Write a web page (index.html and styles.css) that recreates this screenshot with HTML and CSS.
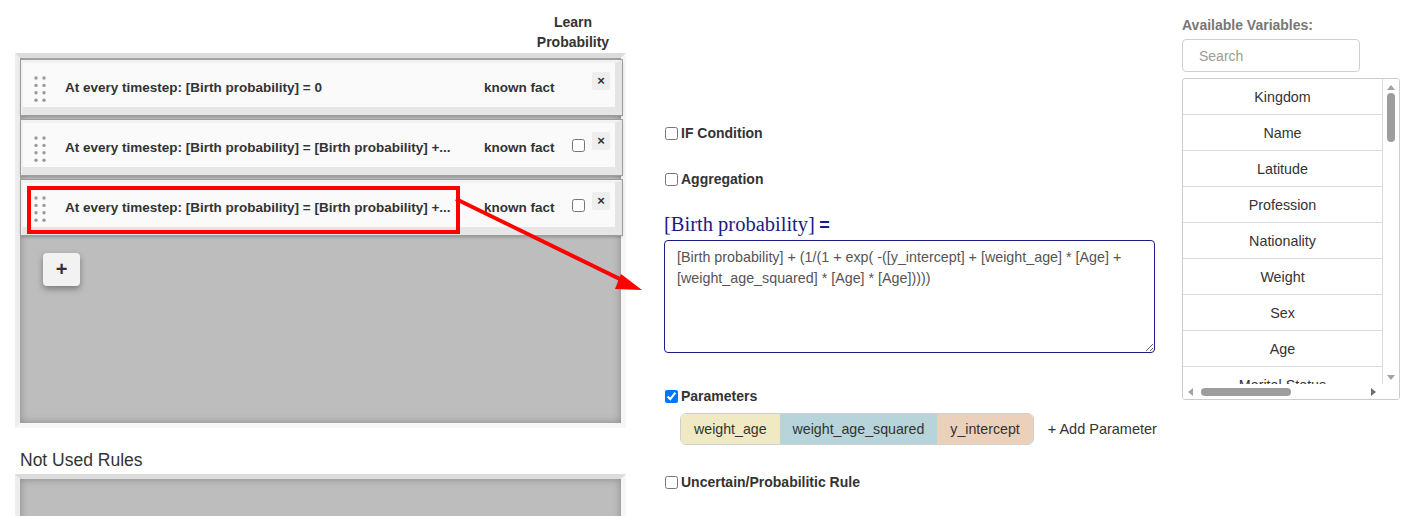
FILE: index.html
```html
<!DOCTYPE html>
<html>
<head>
<meta charset="utf-8">
<link rel="stylesheet" href="styles.css">
</head>
<body>
<div class="page">
  <div class="col-left">
    <div class="learn-head">Learn<br>Probability</div>
    <div class="panel used">
      <div class="rule">
        <svg class="dots" width="12" height="26" viewBox="0 0 12 26"><g fill="#9a9a9a"><circle cx="2" cy="2" r="1.7"/><circle cx="10" cy="2" r="1.7"/><circle cx="2" cy="9.4" r="1.7"/><circle cx="10" cy="9.4" r="1.7"/><circle cx="2" cy="16.8" r="1.7"/><circle cx="10" cy="16.8" r="1.7"/><circle cx="2" cy="24.2" r="1.7"/><circle cx="10" cy="24.2" r="1.7"/></g></svg>
        <span class="rule-text">At every timestep: [Birth probability] = 0</span>
        <span class="rule-kind">known fact</span>
        <span class="rule-check empty"></span>
        <span class="rule-x">×</span>
      </div>
      <div class="rule">
        <svg class="dots" width="12" height="26" viewBox="0 0 12 26"><g fill="#9a9a9a"><circle cx="2" cy="2" r="1.7"/><circle cx="10" cy="2" r="1.7"/><circle cx="2" cy="9.4" r="1.7"/><circle cx="10" cy="9.4" r="1.7"/><circle cx="2" cy="16.8" r="1.7"/><circle cx="10" cy="16.8" r="1.7"/><circle cx="2" cy="24.2" r="1.7"/><circle cx="10" cy="24.2" r="1.7"/></g></svg>
        <span class="rule-text">At every timestep: [Birth probability] = [Birth probability] +...</span>
        <span class="rule-kind">known fact</span>
        <input type="checkbox" class="rule-check">
        <span class="rule-x">×</span>
      </div>
      <div class="rule">
        <svg class="dots" width="12" height="26" viewBox="0 0 12 26"><g fill="#9a9a9a"><circle cx="2" cy="2" r="1.7"/><circle cx="10" cy="2" r="1.7"/><circle cx="2" cy="9.4" r="1.7"/><circle cx="10" cy="9.4" r="1.7"/><circle cx="2" cy="16.8" r="1.7"/><circle cx="10" cy="16.8" r="1.7"/><circle cx="2" cy="24.2" r="1.7"/><circle cx="10" cy="24.2" r="1.7"/></g></svg>
        <span class="rule-text">At every timestep: [Birth probability] = [Birth probability] +...</span>
        <span class="rule-kind">known fact</span>
        <input type="checkbox" class="rule-check">
        <span class="rule-x">×</span>
      </div>
      <button class="add-btn">+</button>
    </div>
    <div class="not-used">Not Used Rules</div>
    <div class="panel unused"></div>
  </div>

  <div class="col-mid">
    <label class="opt first"><input type="checkbox">IF Condition</label>
    <label class="opt agg"><input type="checkbox">Aggregation</label>
    <div class="formula-title"><span class="serif">[Birth probability]</span> <span class="eq">=</span></div>
    <textarea class="formula">[Birth probability] + (1/(1 + exp( -([y_intercept] + [weight_age] * [Age] + [weight_age_squared] * [Age] * [Age]))))</textarea>
    <label class="opt params"><input type="checkbox" checked>Parameters</label>
    <div class="param-row">
      <div class="pills">
        <span class="pill p1">weight_age</span>
        <span class="pill p2">weight_age_squared</span>
        <span class="pill p3">y_intercept</span>
      </div>
      <span class="add-param">+ Add Parameter</span>
    </div>
    <label class="opt uncertain"><input type="checkbox">Uncertain/Probabilitic Rule</label>
  </div>

  <div class="col-right">
    <div class="avail">Available Variables:</div>
    <input class="search" type="text" placeholder="Search">
    <div class="varbox">
      <div class="vars">
        <div class="var">Kingdom</div>
        <div class="var">Name</div>
        <div class="var">Latitude</div>
        <div class="var">Profession</div>
        <div class="var">Nationality</div>
        <div class="var">Weight</div>
        <div class="var">Sex</div>
        <div class="var">Age</div>
        <div class="var">Marital Status</div>
      </div>
      <div class="vscroll">
        <span class="arr up"></span>
        <span class="vthumb"></span>
        <span class="vspace"></span>
        <span class="arr down"></span>
      </div>
      <div class="hscroll">
        <span class="arr left"></span>
        <span class="hthumb"></span>
        <span class="hspace"></span>
        <span class="arr right"></span>
      </div>
      <div class="corner"></div>
    </div>
  </div>

  <svg class="overlay" width="1414" height="516" viewBox="0 0 1414 516">
    <rect x="29" y="188" width="429" height="44" fill="none" stroke="#ff0000" stroke-width="4"/>
    <line x1="456" y1="199" x2="626" y2="282" stroke="#ff0000" stroke-width="4"/>
    <polygon points="642,290 621,274 615,289" fill="#ff0000"/>
  </svg>
</div>
</body>
</html>
```
FILE: styles.css
```css
* { box-sizing: border-box; }
html, body { margin: 0; padding: 0; background: #fff; }
body { font-family: "Liberation Sans", Arial, sans-serif; color: #333; }
.page { position: relative; display: flex; align-items: flex-start; width: 1414px; height: 516px; overflow: hidden; }

/* left column */
.col-left { width: 611px; margin-left: 15px; display: flex; flex-direction: column; }
.learn-head { align-self: flex-end; margin-right: 13px; padding-top: 12px; width: 80px; text-align: center; font-weight: bold; font-size: 14px; line-height: 20px; margin-bottom: 1px; }
.panel { border: 5px solid; border-color: #dcdcdc #f6f6f6 #f7f7f7 #ededed; background: #bdbdbd; box-shadow: inset 0 0 9px rgba(0,0,0,0.28); }
.used { height: 375px; padding: 2px 0 0 1px; display: flex; flex-direction: column; gap: 5px; }
.unused { height: 80px; }

.rule { width: 601px; height: 55px; display: flex; align-items: center; background: #fafafa; border-style: solid; border-width: 3px 7px 8px 2px; border-color: #f2f2f2 #e4e4e4 #e6e6e6 #efefef; box-shadow: 0 0 0 1px #9d9d9d, 0 2px 3px rgba(0,0,0,0.25); padding: 5px 0 0 11px; flex: none; }
.dots { flex: none; margin-top: 2px; }
.rule-text { flex: none; width: 419px; margin-left: 19px; font-weight: bold; font-size: 13.5px; color: #333; white-space: nowrap; }
.rule-kind { flex: none; width: 71px; font-weight: bold; font-size: 13.5px; color: #333; white-space: nowrap; }
.rule-check { flex: none; width: 13px; height: 13px; margin: -5px 0 0 17px; }
.rule-x { flex: none; align-self: flex-start; margin: 4px 0 0 7px; width: 18px; height: 18px; background: #eeeeee; border-radius: 2px; font-weight: bold; font-size: 13px; line-height: 17px; text-align: center; color: #333; }
.add-btn { align-self: flex-start; margin: 13px 0 0 22px; width: 37px; height: 33px; border: none; border-radius: 4px; background: #f2f2f2; box-shadow: 0 3px 6px rgba(0,0,0,0.35); font-family: "Liberation Sans", Arial, sans-serif; font-weight: bold; font-size: 20px; line-height: 33px; padding: 0; color: #333; }
.not-used { margin: 22px 0 4px 5px; font-size: 17.5px; line-height: 20px; color: #333; }

/* middle column */
.col-mid { width: 496px; margin-left: 38px; padding-top: 123px; display: flex; flex-direction: column; align-items: flex-start; }
.opt { display: flex; align-items: center; height: 20px; font-weight: bold; font-size: 14px; color: #333; }
.opt input { margin: 0 3px 0 1px; width: 13px; height: 13px; }
.agg { margin-top: 26px; }
.formula-title { margin-top: 23px; height: 24px; line-height: 24px; color: #1b1b86; }
.formula-title .serif { font-family: "Liberation Serif", "Times New Roman", serif; font-size: 20.5px; }
.formula-title .eq { font-family: "Liberation Sans", Arial, sans-serif; font-weight: bold; font-size: 18px; }
.formula { margin-top: 4px; width: 491px; height: 113px; border: 1px solid #1c1c8a; border-radius: 4px; padding: 6px 12px; font-family: "Liberation Sans", Arial, sans-serif; font-size: 14.3px; line-height: 21px; color: #555; resize: vertical; outline: none; }
.params { margin-top: 33px; }
.param-row { margin: 7px 0 0 16px; display: flex; align-items: center; }
.pills { display: flex; border: 1px solid #cfcfcf; border-radius: 6px; overflow: hidden; height: 32px; }
.pill { padding: 0 13px; line-height: 30px; font-size: 14.2px; color: #333; }
.p1 { background: #efeac4; }
.p2 { background: #b6d4d9; }
.p3 { background: #ebd0bb; }
.add-param { margin-left: 14px; font-size: 14.5px; color: #333; }
.uncertain { margin-top: 27px; }

/* right column */
.col-right { width: 218px; margin-left: 22px; padding-top: 15px; display: flex; flex-direction: column; align-items: flex-start; }
.avail { font-weight: bold; font-size: 14px; line-height: 20px; color: #777; }
.search { margin-top: 4px; width: 178px; height: 33px; border: 1px solid #cfcfcf; border-radius: 4px; padding: 0 16px; font-family: "Liberation Sans", Arial, sans-serif; font-size: 14px; color: #333; outline: none; }
.search::placeholder { color: #9a9a9a; }
.varbox { margin-top: 6px; width: 218px; height: 322px; border: 1px solid #cdcdcd; border-radius: 3px; display: grid; grid-template-columns: 200px 16px; grid-template-rows: 305px 15px; overflow: hidden; }
.vars { overflow: hidden; display: flex; flex-direction: column; }
.var { flex: none; height: 36px; border-right: 1px solid #dcdcdc; border-bottom: 1px solid #dcdcdc; text-align: center; line-height: 37px; font-size: 14.3px; color: #333; }
.vscroll { display: flex; flex-direction: column; align-items: center; background: #fff; }
.vthumb { width: 8px; height: 49px; border-radius: 4px; background: #9d9d9d; margin-top: 3px; }
.vspace { flex: 1; }
.arr { width: 0; height: 0; border: solid transparent; }
.arr.up { margin-top: 6px; border-width: 0 4px 5px 4px; border-bottom-color: #a3a3a3; }
.arr.down { margin-bottom: 4px; border-width: 5px 4px 0 4px; border-top-color: #a3a3a3; }
.hscroll { display: flex; align-items: center; padding: 0 5px; background: #fff; }
.hthumb { width: 90px; height: 8px; border-radius: 4px; background: #9d9d9d; margin-left: 8px; }
.hspace { flex: 1; }
.arr.left { border-width: 4px 5px 4px 0; border-right-color: #a3a3a3; }
.arr.right { border-width: 4px 0 4px 5px; border-left-color: #6e6e6e; margin-right: 2px; }
.corner { background: #fff; }

.overlay { position: absolute; left: 0; top: 0; pointer-events: none; }
```
